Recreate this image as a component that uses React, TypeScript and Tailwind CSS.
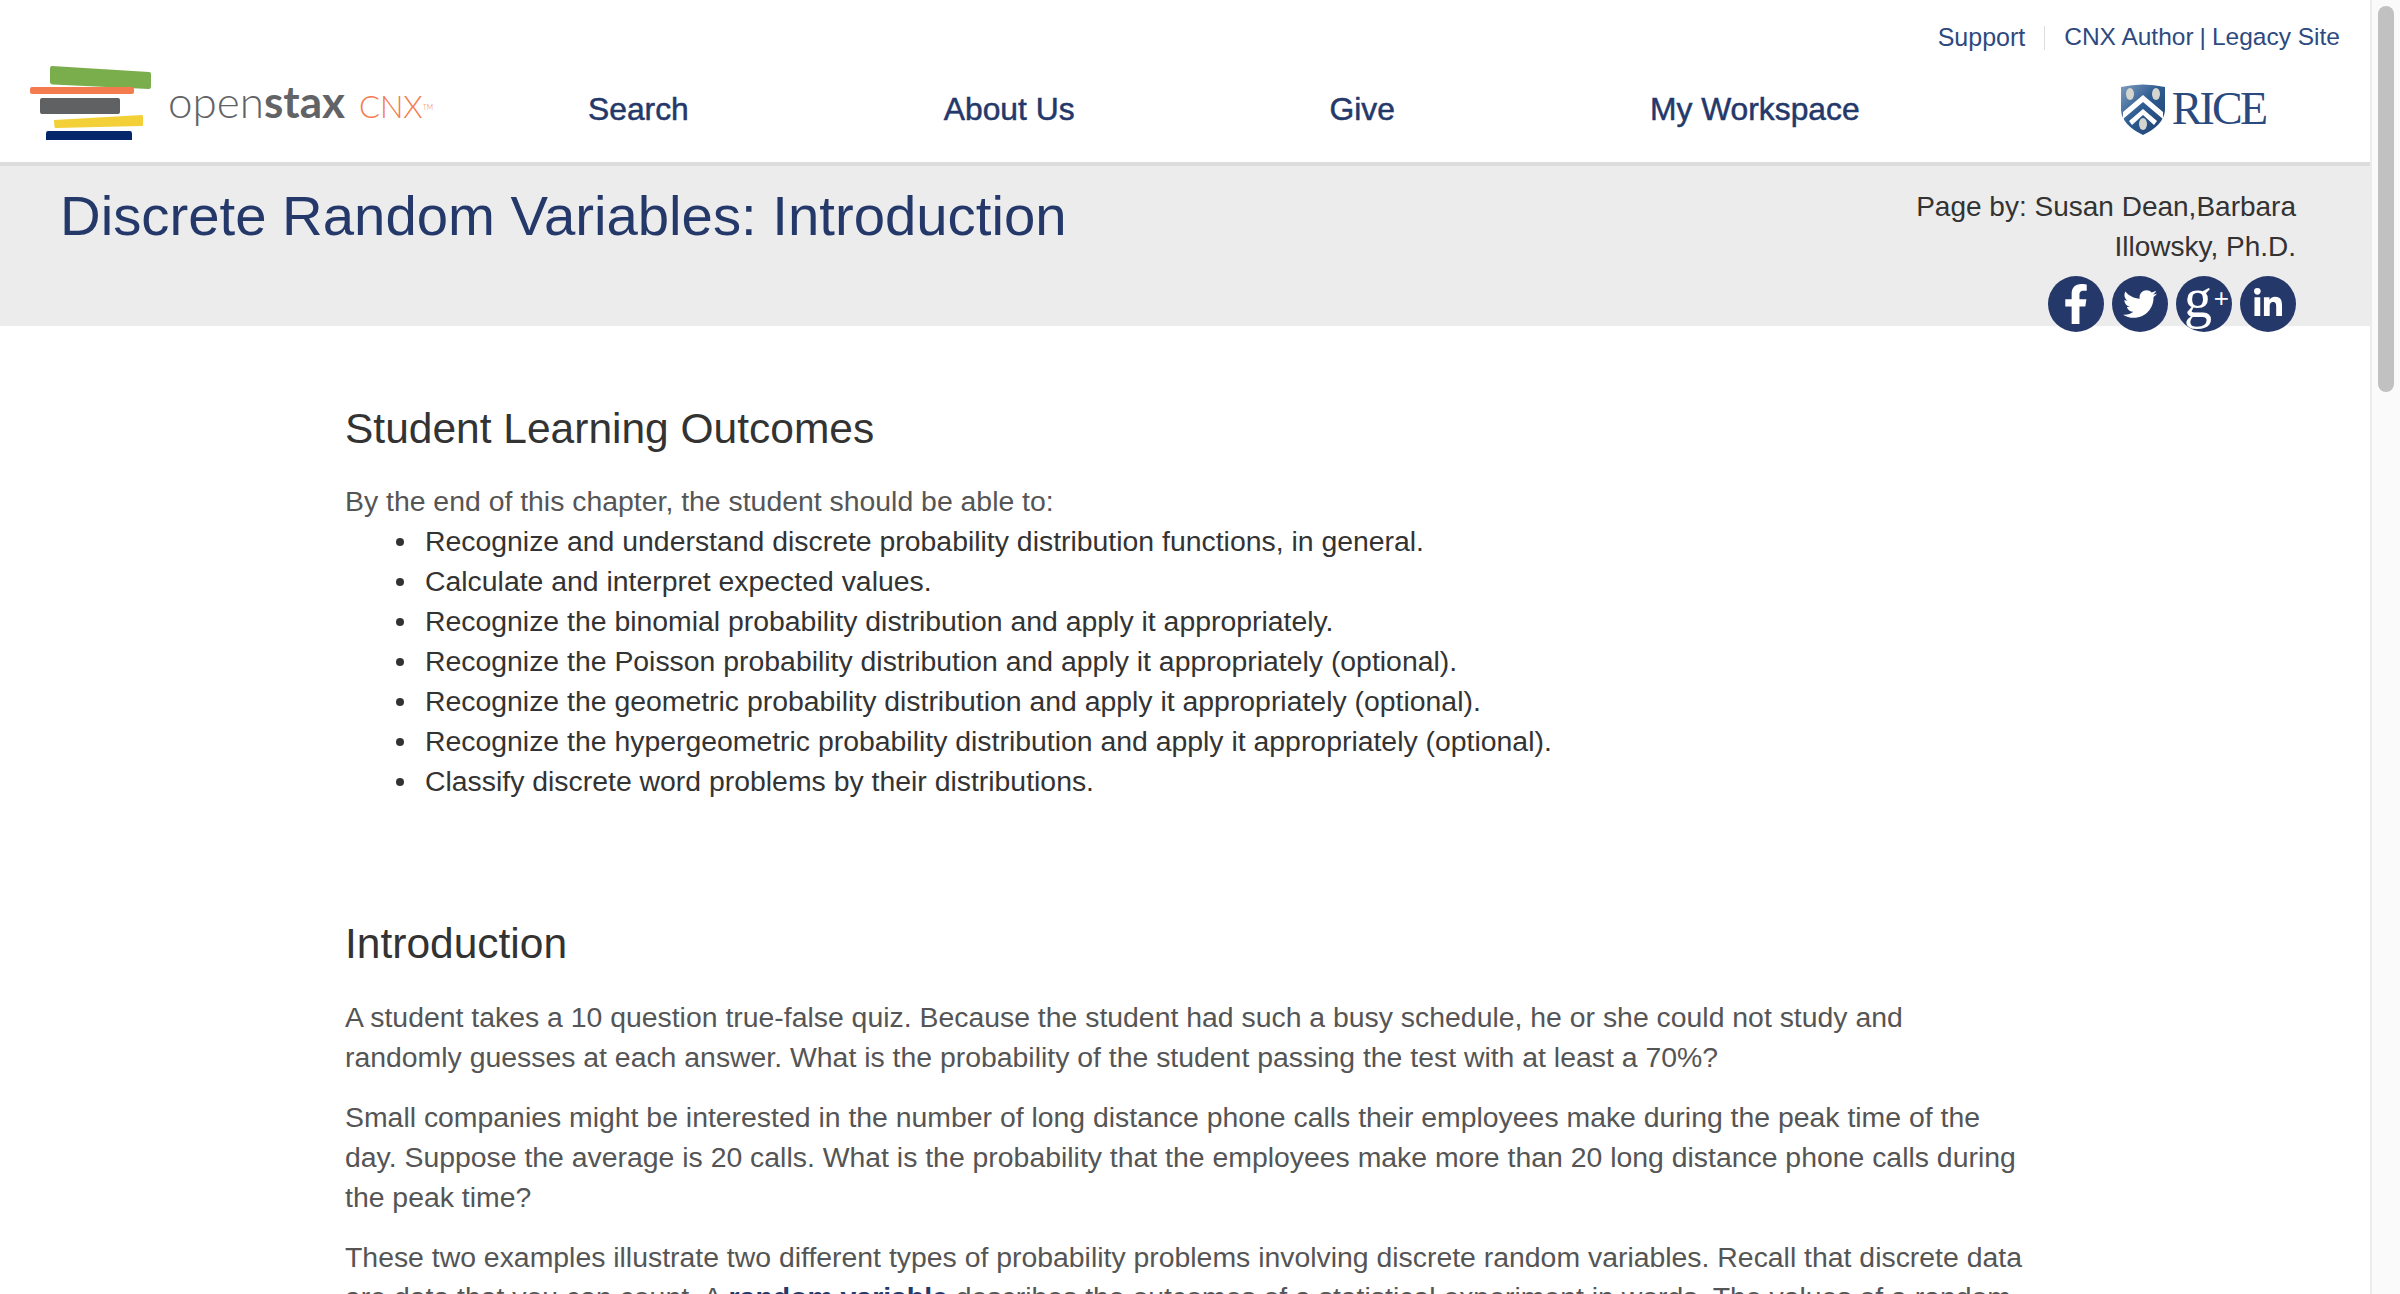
import { FaFacebookF, FaLinkedinIn, FaTwitter } from "react-icons/fa"

const navLinks = ["Search", "About Us", "Give", "My Workspace"]

const outcomes = [
  "Recognize and understand discrete probability distribution functions, in general.",
  "Calculate and interpret expected values.",
  "Recognize the binomial probability distribution and apply it appropriately.",
  "Recognize the Poisson probability distribution and apply it appropriately (optional).",
  "Recognize the geometric probability distribution and apply it appropriately (optional).",
  "Recognize the hypergeometric probability distribution and apply it appropriately (optional).",
  "Classify discrete word problems by their distributions.",
]

function BooksLogo() {
  return (
    <svg width="122" height="76" viewBox="0 0 122 76" className="shrink-0">
      <path d="M22 0 Q20 0 20 3 L20 16 Q20 18 23 18.500 L119 23 Q121 23 121 20 L121 8 Q121 6 119 6 Z" fill="#7aae4c" />
      <rect x="0" y="21" width="104" height="7" rx="2" fill="#f47b4d" />
      <rect x="10" y="32" width="80" height="16" rx="2" fill="#606163" />
      <path d="M24 54 L112 49 Q113 49 113 51 L113 59 Q113 60 112 60 L26 62 Q24.500 62 24.500 61 Z" fill="#f3d037" />
      <path d="M18 65 H100 Q102 65 102 68 V74 H16 V68 Q16 65 18 65 Z" fill="#04276b" />
    </svg>
  )
}

function RiceShield() {
  return (
    <svg width="46" height="52" viewBox="0 0 46 52" className="shrink-0">
      <defs>
        <linearGradient id="shield" x1="0" y1="0" x2="1" y2="1">
          <stop offset="0" stopColor="#7f9dbd" />
          <stop offset="0.45" stopColor="#2f5d92" />
          <stop offset="1" stopColor="#1e3f70" />
        </linearGradient>
      </defs>
      <path d="M1 4 Q23 -1 45 4 L45 27 Q44 42 23 52 Q2 42 1 27 Z" fill="url(#shield)" />
      <path d="M3 29 L23 12 L43 29 L43 36 L23 19 L3 36 Z" fill="#fff" />
      <path d="M9 38 L23 26 L37 38 L34 42 L23 32 L12 42 Z" fill="#fff" />
      <ellipse cx="10" cy="11" rx="4" ry="6" fill="#d5d5d0" />
      <ellipse cx="36" cy="11" rx="4" ry="6" fill="#d5d5d0" />
      <ellipse cx="23" cy="41" rx="4" ry="6" fill="#d5d5d0" />
    </svg>
  )
}

function SocialCircle({ children }: { children: React.ReactNode }) {
  return (
    <a className="relative flex h-[56px] w-[56px] items-center justify-center overflow-hidden rounded-full bg-[#24386a] text-white">
      {children}
    </a>
  )
}

export default function App() {
  return (
    <div className="flex h-screen overflow-hidden bg-white font-['Liberation_Sans',Arial,sans-serif] text-[28.4px] leading-[40px] text-[#555]">
      <div className="min-w-0 flex-1">
        <header className="h-[166px] border-b-4 border-[#dcdcdc]">
          {/* top links */}
          <div className="flex h-[72px] items-start justify-end pt-[18px] pr-[30px] text-[25px] leading-[38px] text-[#2d4a80]">
            <a>Support</a>
            <span className="mx-[19px] mt-[8px] h-[24px] w-px bg-[#ddd]" />
            <div className="text-[24.5px]">
              <a>CNX Author</a>
              <span className="mx-[6px]">|</span>
              <a>Legacy Site</a>
            </div>
          </div>
          <div className="flex items-start pl-[30px]">
            <div className="-mt-[6px] flex w-[400px] items-center">
              <BooksLogo />
              <div className="-mt-[2px] ml-[16px] flex items-baseline font-['Lato',sans-serif] whitespace-nowrap">
                <span className="text-[44px] leading-[50px] font-light text-[#626366]">
                  open<span className="font-bold">stax</span>
                </span>
                <span className="ml-[14px] text-[31px] leading-[50px] font-light text-[#f47b4d]">
                  CNX
                  <sup className="relative -top-[8px] align-baseline text-[7px] leading-none">TM</sup>
                </span>
              </div>
            </div>
            <nav className="mt-[17px] ml-[158px] flex gap-[255px] whitespace-nowrap text-[31.8px] leading-[40px] text-[#24386a] [-webkit-text-stroke:0.5px_#24386a]">
              {navLinks.map((link) => (
                <a key={link}>{link}</a>
              ))}
            </nav>
            <div className="mt-[11px] ml-[260px] flex items-center">
              <RiceShield />
              <span className="ml-[6px] font-['Liberation_Serif',serif] text-[46px] leading-[52px] tracking-[-0.06em] text-[#2a4a7f]">
                RICE
              </span>
            </div>
          </div>
        </header>

        {/* title band */}
        <section className="flex h-[160px] justify-between bg-[#ececec] pt-[21px] pr-[74px] pl-[60px]">
          <h1 className="-mt-[1px] text-[56.3px] leading-[60px] whitespace-nowrap text-[#24386a]">
            Discrete Random Variables: Introduction
          </h1>
          <div className="flex w-[400px] flex-col items-end text-right text-[28px] text-[#333]">
            <p>Page by: Susan Dean,Barbara Illowsky, Ph.D.</p>
            <div className="mt-[9px] flex gap-[8px]">
              <SocialCircle>
                <FaFacebookF size={40} />
              </SocialCircle>
              <SocialCircle>
                <FaTwitter size={34} />
              </SocialCircle>
              <SocialCircle>
                <span className="absolute top-[-6px] left-[8px] font-['Liberation_Serif',serif] text-[56px] leading-[56px]">g</span>
                <span className="absolute top-[9px] right-[3px] text-[26px] leading-[26px]">+</span>
              </SocialCircle>
              <SocialCircle>
                <FaLinkedinIn size={32} />
              </SocialCircle>
            </div>
          </div>
        </section>

        <main className="w-[2027px] pt-[76px] pl-[345px]">
          <h2 className="text-[42.5px] leading-[54px] text-[#333]">Student Learning Outcomes</h2>
          <p className="mt-[25px]">By the end of this chapter, the student should be able to:</p>
          <ul className="pl-[51px] text-[#333]">
            {outcomes.map((item) => (
              <li key={item} className="flex">
                <span className="mt-[17px] mr-[21px] h-[8px] w-[8px] shrink-0 rounded-full bg-[#333]" />
                {item}
              </li>
            ))}
          </ul>

          <h2 className="mt-[116px] text-[42.5px] leading-[54px] text-[#333]">Introduction</h2>
          <p className="mt-[26px]">
            A student takes a 10 question true-false quiz. Because the student had such a busy schedule, he or she could not study and
            <br />
            randomly guesses at each answer. What is the probability of the student passing the test with at least a 70%?
          </p>
          <p className="mt-[20px]">
            Small companies might be interested in the number of long distance phone calls their employees make during the peak time of the day. Suppose the average is 20 calls. What is the probability that the employees make more than 20 long distance phone calls during the peak time?
          </p>
          <p className="mt-[20px]">
            These two examples illustrate two different types of probability problems involving discrete random variables. Recall that discrete data are data that you can count. A <strong className="text-[#24386a]">random variable</strong> describes the outcomes of a statistical experiment in words. The values of a random variable can vary with each repetition of an experiment.
          </p>
        </main>
      </div>

      {/* scrollbar */}
      <div className="w-[30px] shrink-0 border-l-2 border-[#ececec] bg-[#fafafa] pt-[6px] pl-[6px]">
        <div className="h-[386px] w-[16px] rounded-full bg-[#c1c1c1]" />
      </div>
    </div>
  )
}
